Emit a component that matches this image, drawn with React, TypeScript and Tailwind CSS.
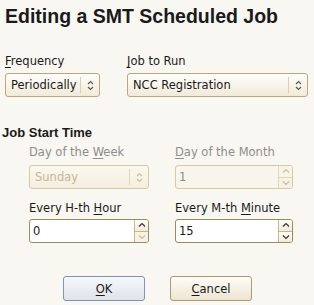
import React from "react";

const body = { fontFamily: '"DejaVu Sans", sans-serif' };
const arial = { fontFamily: '"Liberation Sans", Arial, sans-serif' };

function UpDown({ color }: { color: string }) {
  return (
    <svg width="7" height="11" viewBox="0 0 7 11" fill="none">
      <path d="M1 4 L3.5 1.5 L6 4" stroke={color} strokeWidth="1.1" />
      <path d="M1 7 L3.5 9.5 L6 7" stroke={color} strokeWidth="1.1" />
    </svg>
  );
}

function Chev({ up, color }: { up: boolean; color: string }) {
  return (
    <svg width="8" height="6" viewBox="0 0 8 6" fill="none">
      {up ? (
        <path d="M1 4.5 L4 1.5 L7 4.5" stroke={color} strokeWidth="1.2" />
      ) : (
        <path d="M1 1.5 L4 4.5 L7 1.5" stroke={color} strokeWidth="1.2" />
      )}
    </svg>
  );
}

function Combo({ text, width, disabled }: { text: string; width: string; disabled?: boolean }) {
  return (
    <div
      className={`flex items-center h-[24px] ${width} rounded-[3px] border ${
        disabled
          ? "border-[#d9c9a3] bg-gradient-to-b from-[#fbf8f0] to-[#f4eedf] text-[#c9b68c]"
          : "border-[#bca778] bg-gradient-to-b from-[#fffefb] to-[#f1ead9] text-[#1a1a1a]"
      }`}
    >
      <span className="flex-1 pl-[5px] leading-[14px] whitespace-nowrap overflow-hidden">{text}</span>
      <div className={`w-px h-[16px] ${disabled ? "bg-[#e3d6b7]" : "bg-[#e0cfa6]"}`} />
      <div className="w-[18px] flex justify-center items-center">
        <UpDown color={disabled ? "#cdbf9c" : "#555"} />
      </div>
    </div>
  );
}

function Spin({
  text,
  width,
  disabled,
  upDisabled,
  downDisabled,
}: {
  text: string;
  width: string;
  disabled?: boolean;
  upDisabled?: boolean;
  downDisabled?: boolean;
}) {
  const upOff = disabled || upDisabled;
  const downOff = disabled || downDisabled;
  return (
    <div
      className={`flex h-[24px] ${width} rounded-[3px] border overflow-hidden ${
        disabled ? "border-[#d9c9a3] bg-[#f8f5ec] text-[#8d8d86]" : "border-[#9d8a5b] bg-white text-[#1a1a1a]"
      }`}
    >
      <span className="flex-1 flex items-center pl-[3px] leading-[14px]">{text}</span>
      <div className={`w-[14px] flex flex-col border-l ${disabled ? "border-[#e3d6b7]" : "border-[#c9b68a]"}`}>
        <div
          className={`flex-1 flex items-center justify-center border-b ${
            disabled ? "border-[#e3d6b7]" : "border-[#c9b68a]"
          } ${upOff ? "bg-[#f8f4ea]" : "bg-gradient-to-b from-[#fffefb] to-[#f1ead9]"}`}
        >
          <Chev up color={upOff ? "#cdbf9c" : "#333"} />
        </div>
        <div
          className={`flex-1 flex items-center justify-center ${
            downOff ? "bg-[#f6f1e4]" : "bg-gradient-to-b from-[#fffefb] to-[#f1ead9]"
          }`}
        >
          <Chev up={false} color={downOff ? "#cdbf9c" : "#333"} />
        </div>
      </div>
    </div>
  );
}

function U({ children }: { children: React.ReactNode }) {
  return <span className="underline underline-offset-[2px] decoration-1">{children}</span>;
}

export default function App() {
  return (
    <div className="w-[314px] h-[305px] bg-[#f9f7f1] text-[11.5px] text-[#1a1a1a] overflow-hidden" style={body}>
      <div className="pt-[5px] pl-[5px] h-[27px]">
        <div className="font-bold text-[19.5px] leading-[22px] whitespace-nowrap" style={arial}>
          Editing a SMT Scheduled Job
        </div>
      </div>

      <div className="mt-[27px] flex">
        <div className="pl-[5px] w-[126px]">
          <div className="leading-[14px] h-[14px]">
            <U>F</U>requency
          </div>
          <div className="mt-[5px]">
            <Combo text="Periodically" width="w-[95px]" />
          </div>
        </div>
        <div className="pl-[1px]">
          <div className="leading-[14px] h-[14px]">
            <U>J</U>ob to Run
          </div>
          <div className="mt-[5px]">
            <Combo text="NCC Registration" width="w-[181px]" />
          </div>
        </div>
      </div>

      <div className="mt-[28px] pl-[2px] font-bold text-[13px] leading-[15px] h-[15px]" style={arial}>
        Job Start Time
      </div>

      <div className="mt-[5px] pl-[29px] grid grid-cols-[146px_118px] gap-x-0">
        <div className="leading-[14px] h-[14px] text-[#8e8e8a]">
          Day of the <U>W</U>eek
        </div>
        <div className="leading-[14px] h-[14px] text-[#8e8e8a]">
          <U>D</U>ay of the Month
        </div>
        <div className="mt-[6px]">
          <Combo text="Sunday" width="w-[120px]" disabled />
        </div>
        <div className="mt-[6px]">
          <Spin text="1" width="w-[118px]" disabled />
        </div>
        <div className="mt-[12px] leading-[14px] h-[14px]">
          Every H-th <U>H</U>our
        </div>
        <div className="mt-[12px] leading-[14px] h-[14px]">
          Every M-th <U>M</U>inute
        </div>
        <div className="mt-[4px]">
          <Spin text="0" width="w-[120px]" downDisabled />
        </div>
        <div className="mt-[4px]">
          <Spin text="15" width="w-[118px]" />
        </div>
      </div>

      <div className="mt-[33px] flex justify-center gap-[25px] pl-[1px]">
        <button className="w-[82px] h-[25px] rounded-[3px] border border-[#7e94b0] bg-gradient-to-b from-[#f5f7fa] to-[#dfe4ea] flex items-center justify-center leading-[14px]">
          <U>O</U>K
        </button>
        <button className="w-[82px] h-[25px] rounded-[3px] border border-[#ae9a6b] bg-gradient-to-b from-[#fefcf7] to-[#ede5d2] flex items-center justify-center leading-[14px]">
          <U>C</U>ancel
        </button>
      </div>
    </div>
  );
}
